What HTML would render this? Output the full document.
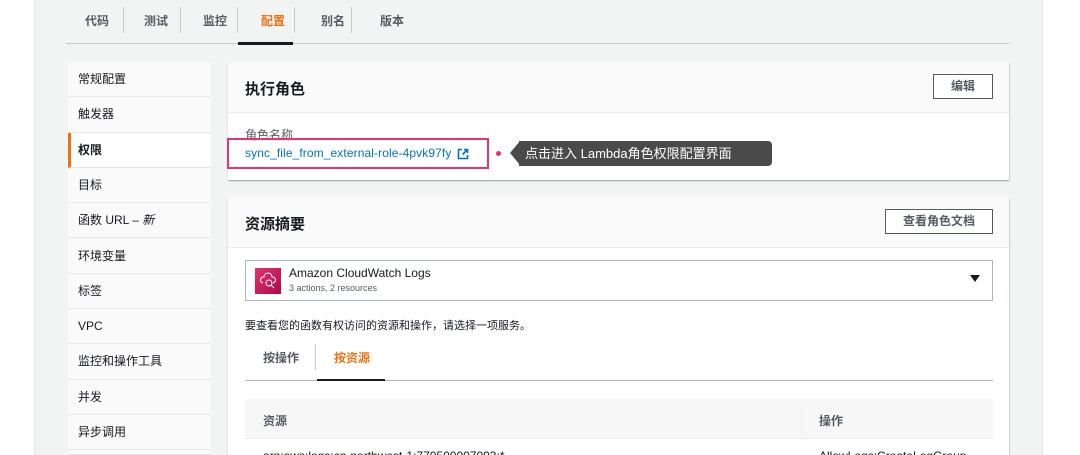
<!DOCTYPE html><html style="width:1080px;height:455px;overflow:hidden"><head><meta charset="utf-8"><style>
*{box-sizing:border-box;margin:0;padding:0}
body{width:1080px;height:455px;overflow:hidden;background:#fff;font-family:"Liberation Sans","Noto Sans CJK SC",sans-serif;color:#16191f;position:relative}
.abs{position:absolute}
.bg{left:34px;top:0;width:1009px;height:455px;background:#f2f3f3;border-left:1px solid #e3e4e4;border-right:1px solid #e3e4e4}
.tab{top:12px;font-size:12px;font-weight:bold;color:#545b64}
.sep{top:7px;width:1px;height:26px;background:#c5c9cc}
.side{left:68px;width:143px;height:35.3px;background:#fafafa;border-bottom:1px solid #e6e7e7;font-size:12px;color:#16191f;padding-left:10px;line-height:35px}
.panel{left:228px;width:781px;background:#fff;box-shadow:0 1px 1px rgba(0,28,36,.3),1px 1px 1px rgba(0,28,36,.1)}
.ph{background:#fafafa;border-bottom:1px solid #eaeded;height:51px;position:relative}
.ph h2{position:absolute;left:17px;top:16px;font-size:15px;font-weight:bold}
.btn{position:absolute;border:1px solid #545b64;background:#fff;font-size:12px;font-weight:bold;color:#545b64;height:25px;line-height:23px;text-align:center}
</style></head><body>
<div class="abs bg"></div>
<div class="abs tab" style="left:85px">代码</div>
<div class="abs sep" style="left:123px"></div>
<div class="abs tab" style="left:144px">测试</div>
<div class="abs sep" style="left:180px"></div>
<div class="abs tab" style="left:203px">监控</div>
<div class="abs sep" style="left:237px"></div>
<div class="abs tab" style="left:261px;color:#ec7211">配置</div>
<div class="abs sep" style="left:294px"></div>
<div class="abs tab" style="left:321px">别名</div>
<div class="abs sep" style="left:351px"></div>
<div class="abs tab" style="left:380px">版本</div>
<div class="abs" style="left:66px;top:43px;width:943px;height:1px;background:#c5c9cc"></div>
<div class="abs" style="left:238px;top:42px;width:55px;height:3px;background:#16191f"></div>

<div class="abs side" style="top:62px">常规配置</div>
<div class="abs side" style="top:97.3px">触发器</div>
<div class="abs side" style="top:132.6px;background:#fff;font-weight:bold;border-left:3px solid #ec7211;padding-left:7px">权限</div>
<div class="abs side" style="top:168px">目标</div>
<div class="abs side" style="top:203.2px">函数 URL – <i>新</i></div>
<div class="abs side" style="top:238.5px">环境变量</div>
<div class="abs side" style="top:273.8px">标签</div>
<div class="abs side" style="top:309px">VPC</div>
<div class="abs side" style="top:344.4px">监控和操作工具</div>
<div class="abs side" style="top:379.7px">并发</div>
<div class="abs side" style="top:415px">异步调用</div>
<div class="abs side" style="top:450.3px;height:4.7px"></div>

<div class="abs panel" style="top:62px;height:118px">
 <div class="ph"><h2>执行角色</h2><div class="btn" style="left:705px;top:12px;width:60px">编辑</div></div>
 <div style="position:absolute;left:17px;top:64px;font-size:12px;color:#545b64">角色名称</div>
</div>
<div class="abs" style="left:227px;top:138px;width:262px;height:31px;border:2px solid #e8336d"></div>
<div class="abs" style="left:245px;top:146px;font-size:12px;color:#0073bb;letter-spacing:0.1px">sync_file_from_external-role-4pvk97fy</div>
<svg class="abs" style="left:457px;top:148px" width="12" height="12" viewBox="0 0 12 12"><path d="M5 1.5H1.5v9h9V7M7 1.5h3.5V5M10.5 1.5L5.5 6.5" fill="none" stroke="#0073bb" stroke-width="1.6"/></svg>
<div class="abs" style="left:496px;top:151px;width:5px;height:5px;border-radius:50%;background:#e8336d"></div>
<div class="abs" style="left:510px;top:141px;width:0;height:0;border-top:12px solid transparent;border-bottom:12px solid transparent;border-right:10px solid #4a4a4a"></div>
<div class="abs" style="left:519px;top:141px;width:253px;height:25px;background:#4a4a4a;border-radius:0 4px 4px 0;color:#fff;font-size:13px;line-height:25px;padding-left:6px">点击进入 Lambda角色权限配置界面</div>

<div class="abs panel" style="top:197px;height:258px;overflow:hidden">
 <div class="ph"><h2>资源摘要</h2><div class="btn" style="left:657px;top:12px;width:108px">查看角色文档</div></div>
 <div style="position:absolute;left:17px;top:63px;width:748px;height:41px;border:1px solid #aab7b8">
  <div style="position:absolute;left:9px;top:7px;width:26px;height:26px;background:linear-gradient(135deg,#e0346c,#b0084d)"><svg width="26" height="26"><path d="M8 15a3 3 0 0 1 1-6 4 4 0 0 1 8 0 3 3 0 0 1 1 6" fill="none" stroke="#fff" stroke-width="1"/><circle cx="14" cy="15" r="3" fill="none" stroke="#fff"/><path d="M16 17l3 3" stroke="#fff"/></svg></div>
  <div style="position:absolute;left:43px;top:5px;font-size:12px">Amazon CloudWatch Logs</div>
  <div style="position:absolute;left:43px;top:22px;font-size:9px;color:#545b64">3 actions, 2 resources</div>
  <div style="position:absolute;right:12px;top:14px;width:0;height:0;border-left:5px solid transparent;border-right:5px solid transparent;border-top:7px solid #16191f"></div>
 </div>
 <div style="position:absolute;left:17px;top:120px;font-size:11px">要查看您的函数有权访问的资源和操作，请选择一项服务。</div>
 <div style="position:absolute;left:35px;top:152px;font-size:12px;font-weight:bold;color:#545b64">按操作</div>
 <div style="position:absolute;left:87px;top:147px;width:1px;height:26px;background:#c5c9cc"></div>
 <div style="position:absolute;left:106px;top:152px;font-size:12px;font-weight:bold;color:#ec7211">按资源</div>
 <div style="position:absolute;left:17px;top:183px;width:748px;height:1px;background:#aab7b8"></div>
 <div style="position:absolute;left:89px;top:182px;width:68px;height:2px;background:#16191f"></div>
 <div style="position:absolute;left:17px;top:202px;width:748px;height:40px;background:#f7f7f7;border-bottom:1px solid #eaeded"></div>
 <div style="position:absolute;left:35px;top:215px;font-size:12px;font-weight:bold;color:#545b64">资源</div>
 <div style="position:absolute;left:573px;top:208px;width:1px;height:28px;background:#eaeded"></div>
 <div style="position:absolute;left:591px;top:215px;font-size:12px;font-weight:bold;color:#545b64">操作</div>
 <div style="position:absolute;left:35px;top:252px;font-size:12px">arn:aws:logs:cn-northwest-1:770500007093:*</div>
 <div style="position:absolute;left:591px;top:252px;font-size:12px">AllowLogs:CreateLogGroup</div>
</div>
</body></html>
